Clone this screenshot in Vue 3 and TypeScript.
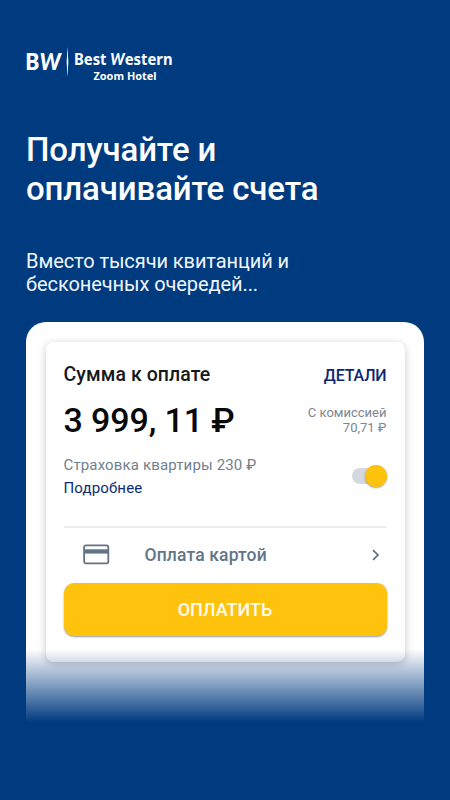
<script setup lang="ts">
import { ref } from 'vue'

const insured = ref<boolean>(true)
const title: string[] = ['Получайте и', 'оплачивайте счета']
const subtitle: string[] = ['Вместо тысячи квитанций и', 'бесконечных очередей...']
</script>

<template>
  <main class="screen">
    <svg class="logo" width="150" height="36" viewBox="0 0 150 36" role="img" aria-label="Best Western Zoom Hotel">
      <g class="brand">
        <text x="-1" y="21.500" font-size="22.500" textLength="36" lengthAdjust="spacingAndGlyphs">B<tspan class="swash">W</tspan></text>
        <text x="48" y="17" font-size="16.500" textLength="98.500" lengthAdjust="spacingAndGlyphs">Best <tspan class="swash">W</tspan>estern</text>
        <text x="67.500" y="32" font-size="11.200" textLength="63" lengthAdjust="spacingAndGlyphs">Zoom Hotel</text>
      </g>
      <path d="M41.500 -1.500 Q43.200 14 41.500 29 Q39.800 14 41.500 -1.500Z" fill="#fff" />
    </svg>

    <h1 class="title"><span v-for="line in title" :key="line">{{ line }}</span></h1>
    <p class="subtitle"><span v-for="line in subtitle" :key="line">{{ line }}</span></p>

    <section class="sheet">
      <article class="card">
        <header class="head">
          <span class="label">Сумма к оплате</span>
          <a class="details">ДЕТАЛИ</a>
        </header>
        <div class="sum">
          <strong class="amount">3 999, 11 ₽</strong>
          <div class="fee"><span>С комиссией</span><span>70,71 ₽</span></div>
        </div>
        <div class="insurance">
          <div class="info">
            <span class="name">Страховка квартиры 230 ₽</span>
            <a class="more">Подробнее</a>
          </div>
          <button class="toggle" :class="{ on: insured }" role="switch" :aria-checked="insured" @click="insured = !insured">
            <i class="knob"></i>
          </button>
        </div>
        <div class="method">
          <svg width="28" height="22" viewBox="0 0 28 22">
            <rect x="2.100" y="1.400" width="24.200" height="18" rx="1.800" fill="none" stroke="#627587" stroke-width="1.800" />
            <path d="M2 5.300h24.400v4.300H2z" fill="#627587" />
          </svg>
          <span>Оплата картой</span>
          <svg class="chevron" width="8" height="12" viewBox="0 0 8 12">
            <path d="M1 1.200 6 6 1 10.800" fill="none" stroke="#596b7d" stroke-width="1.600" />
          </svg>
        </div>
        <button class="pay">ОПЛАТИТЬ</button>
      </article>
      <div class="fade"></div>
    </section>
  </main>
</template>

<style>
body { margin: 0; background: #003b80; }
</style>

<style scoped>
.screen {
  box-sizing: border-box;
  width: 450px;
  height: 800px;
  padding: 48px 26px 0;
  overflow: hidden;
  background: #003b80;
  color: #fff;
  font-family: Roboto, "Noto Sans", sans-serif;
}
.logo { display: block; overflow: visible; }
.brand { fill: #fff; font-family: "Noto Sans", "Open Sans", sans-serif; font-weight: 700; }
.swash { font-family: Lato, "Noto Sans", sans-serif; font-style: italic; font-weight: 900; }
.title {
  margin: 46px 0 0;
  font-size: 33px;
  line-height: 39px;
  font-weight: 500;
  letter-spacing: -0.120px;
  white-space: nowrap;
}
.title span, .subtitle span { display: block; }
.subtitle {
  margin: 42px 0 0;
  font-size: 20px;
  line-height: 23px;
  letter-spacing: -0.080px;
  color: #f0f6ff;
  white-space: nowrap;
}
.sheet {
  position: relative;
  box-sizing: border-box;
  height: 400px;
  margin-top: 26px;
  padding: 20px 19.500px 0;
  border-radius: 20px 20px 0 0;
  background: #fff;
}
.card {
  box-sizing: border-box;
  height: 320px;
  padding: 19px 18px 0;
  border-radius: 8px;
  background: #fff;
  box-shadow: 0 2px 9px rgba(0, 0, 0, 0.22);
}
.head { display: flex; justify-content: space-between; height: 26px; }
.label { font-size: 19.500px; line-height: 28px; font-weight: 500; letter-spacing: 0.080px; color: #17181c; }
.details { font-size: 16px; line-height: 29px; font-weight: 500; letter-spacing: -0.150px; color: #0b2675; }
.sum { display: flex; justify-content: space-between; height: 64px; }
.amount { font-size: 34px; line-height: 66px; font-weight: 500; letter-spacing: -0.120px; color: #07080a; white-space: nowrap; }
.fee {
  display: flex;
  flex-direction: column;
  align-items: flex-end;
  padding-top: 17.500px;
  font-size: 13px;
  line-height: 15px;
  color: #7b8794;
}
.insurance {
  display: flex;
  justify-content: space-between;
  height: 75px;
  border-bottom: 2px solid #ededef;
}
.info { display: flex; flex-direction: column; padding-top: 3px; font-size: 15px; line-height: 23px; letter-spacing: 0.150px; }
.name { color: #71808e; }
.more { color: #0b2b78; }
.toggle {
  display: flex;
  align-items: center;
  width: 35px;
  height: 16px;
  margin-top: 17px;
  padding: 0;
  border: 0;
  border-radius: 8px;
  background: #d5d9de;
}
.toggle.on { justify-content: flex-end; }
.knob {
  flex: none;
  width: 22px;
  height: 22px;
  border-radius: 50%;
  background: #ffc20d;
  box-shadow: 0 1px 2px rgba(0, 0, 0, 0.35);
}
.method {
  box-sizing: border-box;
  display: flex;
  align-items: center;
  height: 55.300px;
  padding: 0 7px 2px 18px;
  font-size: 17.500px;
  font-weight: 500;
  letter-spacing: 0.150px;
  color: #627587;
}
.method span { flex: 1; margin-left: 35px; }
.pay {
  display: block;
  width: 100%;
  height: 52.500px;
  padding: 0;
  border: 0;
  border-radius: 10px;
  background: #ffc20d;
  box-shadow: 0 1px 2px rgba(0, 0, 0, 0.4);
  color: #fffdf0;
  font: 500 18px/52px Roboto, "Noto Sans", sans-serif;
}
.fade {
  position: absolute;
  inset: auto 0 0;
  height: 73px;
  background: linear-gradient(rgba(0, 59, 128, 0), #003b80);
}
</style>
